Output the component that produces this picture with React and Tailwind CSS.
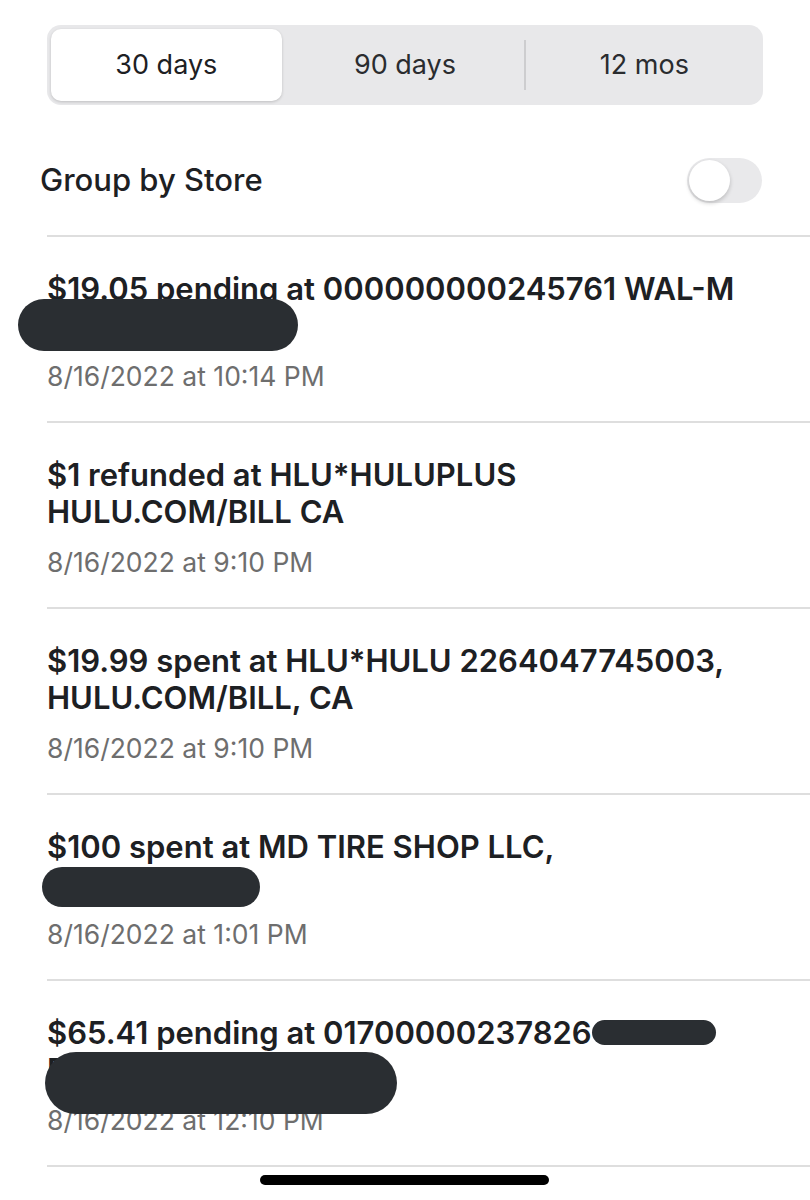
export default function App() {
  const rows = [
    {
      lines: ["$19.05 pending at 000000000245761 WAL-M", ""],
      date: "8/16/2022 at 10:14 PM",
      blobs: ["left-[-29px] top-[62px] w-[280px] h-[52px]"],
    },
    {
      lines: ["$1 refunded at HLU*HULUPLUS", "HULU.COM/BILL CA"],
      date: "8/16/2022 at 9:10 PM",
      blobs: [],
    },
    {
      lines: ["$19.99 spent at HLU*HULU 2264047745003,", "HULU.COM/BILL, CA"],
      date: "8/16/2022 at 9:10 PM",
      blobs: [],
    },
    {
      lines: ["$100 spent at MD TIRE SHOP LLC,", ""],
      date: "8/16/2022 at 1:01 PM",
      blobs: ["left-[-5px] top-[72px] w-[218px] h-[40px]"],
    },
    {
      lines: ["$65.41 pending at 01700000237826", "F"],
      date: "8/16/2022 at 12:10 PM",
      blobs: [
        "left-[545px] top-[39px] w-[124px] h-[25px]",
        "left-[-2px] top-[71px] w-[352px] h-[62px]",
      ],
    },
  ];

  return (
    <div className="w-[810px] h-[1200px] bg-white overflow-hidden relative font-['Inter',sans-serif] text-[#1d2023]">
      {/* Range tabs */}
      <div className="ml-[47px] mt-[25px] w-[716px] h-[80px] rounded-[14px] bg-[#e8e8ea] flex items-center">
        <div className="w-1/3 h-full p-[4px]">
          <div className="h-full rounded-[10px] bg-white shadow-[0_1px_3px_rgba(0,0,0,0.18)] flex items-center justify-center text-[27px]">
            30 days
          </div>
        </div>
        <div className="w-1/3 flex items-center justify-center text-[27px] text-[#2a2c2f]">
          90 days
        </div>
        <div className="w-[1.5px] h-[50px] bg-[#cdcdcf]"></div>
        <div className="flex-1 flex items-center justify-center text-[27px] text-[#2a2c2f]">
          12 mos
        </div>
      </div>

      {/* Group by store */}
      <div className="mt-[53px] h-[45px] pl-[40px] pr-[48px] flex items-center justify-between">
        <span className="text-[31px] font-medium">Group by Store</span>
        <div className="w-[75px] h-[45px] rounded-full bg-[#e9e9eb] p-[2px] flex items-center">
          <div className="w-[41px] h-[41px] rounded-full bg-white shadow-[0_2px_4px_rgba(0,0,0,0.2)]"></div>
        </div>
      </div>

      {/* Transactions */}
      <div className="ml-[47px] mt-[32px]">
        {rows.map((r, i) => (
          <div key={i} className="relative border-t-2 border-[#dedede] pt-[33px] pb-[28px]">
            {r.lines.map((l, j) => (
              <div key={j} className="text-[31px] leading-[37px] font-semibold h-[37px] whitespace-nowrap">
                {l}
              </div>
            ))}
            <div className="mt-[15px] text-[26.5px] leading-[34px] text-[#6e6e6e]">{r.date}</div>
            {r.blobs.map((b, k) => (
              <div key={k} className={"absolute rounded-full bg-[#2a2e32] " + b}></div>
            ))}
          </div>
        ))}
        <div className="border-t-2 border-[#dedede]"></div>
      </div>

      {/* Home indicator */}
      <div className="absolute left-[260px] top-[1175px] w-[289px] h-[10px] rounded-full bg-black"></div>
    </div>
  );
}
